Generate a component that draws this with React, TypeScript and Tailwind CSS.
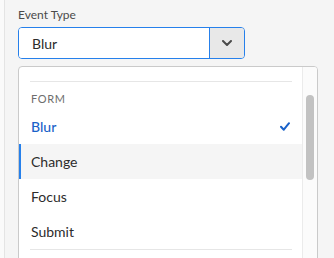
import React from 'react';

const items = [
  { label: 'Blur', selected: true },
  { label: 'Change', focused: true },
  { label: 'Focus' },
  { label: 'Submit' },
];

export default function App() {
  return (
    <div className="w-[334px] h-[258px] overflow-hidden bg-[#f5f5f5] flex font-['Lato',sans-serif]">
      {/* Left panel edge */}
      <div className="w-[5px] flex-shrink-0 bg-[#fafafa] border-r border-[#e4e4e4]" />

      <div className="flex-1 pl-[13px] pt-[7px]">
        <div className="text-[12px] leading-[16px] text-[#4b4b4b]">Event Type</div>

        {/* Picker */}
        <div className="mt-[4px] w-[227px] h-[32px] flex border border-[#2680eb] rounded-[4px] overflow-hidden">
          <div className="flex-1 bg-white pl-[13px] flex items-center text-[14px] text-[#2c2c2c]">Blur</div>
          <div className="w-[35px] border-l border-[#2680eb] bg-[#e8e8e8] flex items-center justify-center">
            <svg width="10" height="6" viewBox="0 0 10 6" fill="none">
              <path d="M1 1l4 4 4-4" stroke="#4b4b4b" strokeWidth="2" strokeLinecap="round" strokeLinejoin="round" />
            </svg>
          </div>
        </div>

        {/* Popover */}
        <div className="mt-[7px] w-[300px] h-[220px] bg-white border border-[#cacaca] rounded-[4px] flex overflow-hidden">
          <div className="flex-1 pt-[14px]">
            <div className="ml-[11px] mr-[10px] h-px bg-[#e6e6e6]" />
            <div className="pl-[12px] pt-[11px] pb-[4px] text-[11px] leading-[12px] tracking-[0.06em] text-[#6e6e6e]">FORM</div>
            {items.map((item) => (
              <div
                key={item.label}
                className={`h-[35px] flex items-center justify-between pr-[12px] text-[14px] ${
                  item.focused ? 'bg-[#f5f5f5] border-l-2 border-[#2680eb] pl-[10px]' : 'pl-[12px]'
                } ${item.selected ? 'text-[#1a62c9] font-medium' : 'text-[#2c2c2c]'}`}
              >
                <span>{item.label}</span>
                {item.selected && (
                  <svg width="10" height="9" viewBox="0 0 10 9" fill="none">
                    <path d="M1 4.8l2.8 2.9L9 1.2" stroke="#1a62c9" strokeWidth="2" strokeLinecap="round" strokeLinejoin="round" />
                  </svg>
                )}
              </div>
            ))}
            <div className="ml-[11px] mr-[10px] h-px bg-[#e6e6e6]" />
          </div>

          {/* Scrollbar */}
          <div className="w-[15px] flex-shrink-0 border-l border-[#ebebeb] bg-[#fbfbfb] pt-[28px]">
            <div className="ml-[3px] w-[8px] h-[85px] rounded-full bg-[#c2c2c2]" />
          </div>
        </div>
      </div>
    </div>
  );
}
